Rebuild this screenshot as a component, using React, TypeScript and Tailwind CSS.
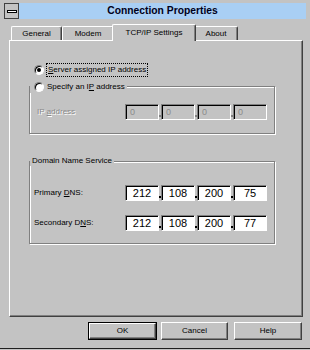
import React from 'react';

const raised =
  'border border-t-white border-l-white border-r-[#404040] border-b-[#404040] shadow-[inset_-1px_-1px_0_#808080]';

function Radio({ checked }: { checked?: boolean }) {
  return (
    <span className="w-[10px] h-[10px] rounded-full border border-t-[#808080] border-l-[#808080] border-r-white border-b-white bg-white shadow-[inset_1px_1px_0_#000] flex items-center justify-center shrink-0">
      {checked && <span className="w-[4px] h-[4px] rounded-full bg-black" />}
    </span>
  );
}

function Octet({ value, disabled }: { value: string; disabled?: boolean }) {
  return (
    <div
      className={`w-[34px] h-[16px] border border-t-[#808080] border-l-[#808080] border-r-white border-b-white shadow-[inset_1px_1px_0_#000] flex items-center ${
        disabled
          ? 'bg-[#c3c3c3] text-[#8a8a8a] text-[9px] pl-[4px]'
          : 'bg-white justify-center text-[11px] text-black'
      }`}
    >
      {value}
    </div>
  );
}

function IpBox({ values, disabled }: { values: string[]; disabled?: boolean }) {
  return (
    <div className="flex">
      {values.map((v, i) => (
        <React.Fragment key={i}>
          {i > 0 && (
            <div className="w-[2px] h-[16px] flex items-end pb-[3px]">
              <div className={`w-[2px] h-[2px] ${disabled ? 'bg-[#808080]' : 'bg-black'}`} />
            </div>
          )}
          <Octet value={v} disabled={disabled} />
        </React.Fragment>
      ))}
    </div>
  );
}

function Tab({ label, width }: { label: string; width: string }) {
  return (
    <div
      className={`${width} h-[14px] border-t border-l border-r border-t-white border-l-white border-r-[#404040] shadow-[inset_-1px_0_0_#808080] rounded-t-[2px] flex items-center justify-center`}
    >
      {label}
    </div>
  );
}

export default function App() {
  return (
    <div className="w-[310px] h-[350px] bg-[#c3c3c3] font-['Liberation_Sans',Arial,sans-serif] text-[8px] leading-none text-black">
      <div className="h-[349px] border-b border-[#202020] px-[4px] pt-[3px] flex flex-col">
        {/* title bar */}
        <div className="flex h-[16px]">
          <div className="w-[15px] h-[16px] border border-[#404040] bg-[#c3c3c3] flex items-center justify-center">
            <div className="w-[10px] h-[3px] border border-black bg-white" />
          </div>
          <div className="flex-1 bg-[#a9cff4] flex items-center justify-center font-bold text-[10.3px] text-[#00001a]">
            Connection Properties
          </div>
        </div>

        {/* tabs */}
        <div className="mt-[5px] h-[16px] ml-[7px] flex items-end">
          <Tab label="General" width="w-[51px]" />
          <Tab label="Modem" width="w-[52px]" />
          <div className="relative z-10 w-[84px] h-[17px] -mx-[2px] -mb-[1px] bg-[#c3c3c3] border-t border-l border-r border-t-white border-l-white border-r-[#404040] shadow-[inset_-1px_0_0_#808080] rounded-t-[2px] flex justify-center pt-[4px]">
            TCP/IP Settings
          </div>
          <Tab label="About" width="w-[44px]" />
        </div>

        {/* panel */}
        <div className={`ml-[5px] w-[294px] h-[277px] ${raised}`}>
          <div className="ml-[19px] w-[246px] flex flex-col">
            <div className="mt-[23px] h-[12px] pl-[5px] flex items-center gap-[3px]">
              <Radio checked />
              <span className="outline-1 outline-dotted outline-black px-[1px] py-[2px]">
                <u>S</u>erver assigned IP address
              </span>
            </div>

            <fieldset className="mt-[4px] border border-[#808080] shadow-[1px_1px_0_#fff,inset_1px_1px_0_#fff]">
              <legend className="h-[13px] pl-[4px] pr-[2px] bg-[#c3c3c3] flex items-center gap-[3px]">
                <Radio />
                <span>
                  Specify an I<u>P</u> address
                </span>
              </legend>
              <div className="pt-[11px] pb-[13px] flex items-center">
                <span className="w-[95px] pl-[7px] text-[#8a8a8a] [text-shadow:1px_1px_0_#fff]">
                  IP <u>a</u>ddress
                </span>
                <IpBox values={['0', '0', '0', '0']} disabled />
              </div>
            </fieldset>

            <fieldset className="mt-[22px] border border-[#808080] shadow-[1px_1px_0_#fff,inset_1px_1px_0_#fff]">
              <legend className="h-[10px] px-[2px] bg-[#c3c3c3] flex items-center">Domain Name Service</legend>
              <div className="pt-[19px] pb-[12px] flex flex-col gap-[14px]">
                <div className="flex items-center">
                  <span className="w-[95px] pl-[4px]">
                    Primary <u>D</u>NS:
                  </span>
                  <IpBox values={['212', '108', '200', '75']} />
                </div>
                <div className="flex items-center">
                  <span className="w-[95px] pl-[4px]">
                    Secondary D<u>N</u>S:
                  </span>
                  <IpBox values={['212', '108', '200', '77']} />
                </div>
              </div>
            </fieldset>
          </div>
        </div>

        {/* buttons */}
        <div className="mt-[5px] ml-[84px] flex">
          <div className="w-[69px] h-[18px] border border-black">
            <div className={`h-full ${raised} flex items-center justify-center`}>OK</div>
          </div>
          <div className={`ml-[4px] w-[67px] h-[18px] ${raised} flex items-center justify-center`}>Cancel</div>
          <div className={`ml-[6px] w-[68px] h-[18px] ${raised} flex items-center justify-center`}>Help</div>
        </div>
      </div>
    </div>
  );
}
